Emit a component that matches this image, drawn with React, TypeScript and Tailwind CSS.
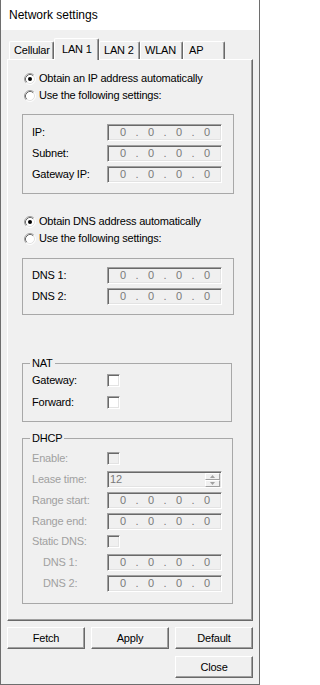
import React from "react";

// classic win32 dialog look, all flow layout

function Radio({ checked }: { checked?: boolean }) {
  return (
    <svg width="12" height="12" viewBox="0 0 12 12" className="shrink-0">
      <circle cx="6" cy="6" r="5" fill="#fff" />
      <path d="M2.11 9.89 A5.5 5.5 0 0 1 9.89 2.11" stroke="#a0a0a0" fill="none" />
      <path d="M9.89 2.11 A5.5 5.5 0 0 1 2.11 9.89" stroke="#ffffff" fill="none" />
      <path d="M2.82 9.18 A4.5 4.5 0 0 1 9.18 2.82" stroke="#696969" fill="none" />
      <path d="M9.18 2.82 A4.5 4.5 0 0 1 2.82 9.18" stroke="#e3e3e3" fill="none" />
      {checked && <circle cx="6" cy="6" r="2" fill="#000" />}
    </svg>
  );
}

function Check({ disabled }: { disabled?: boolean }) {
  return (
    <span
      className={`block w-[13px] h-[13px] border border-t-[#a0a0a0] border-l-[#a0a0a0] border-r-white border-b-white shadow-[inset_1px_1px_0_#696969,inset_-1px_-1px_0_#e3e3e3] ${
        disabled ? "bg-[#f0f0f0]" : "bg-white"
      }`}
    />
  );
}

function IpField() {
  const parts = ["0", ".", "0", ".", "0", ".", "0"];
  return (
    <div className="w-[115px] h-[17px] flex items-center pl-[7px] border border-t-[#a0a0a0] border-l-[#a0a0a0] border-r-white border-b-white shadow-[inset_1px_1px_0_#696969,inset_-1px_-1px_0_#e3e3e3] bg-[#f0f0f0] text-[#7a7a7a]">
      {parts.map((p, i) => (
        <span key={i} className={p === "." ? "w-[12px] text-center" : "w-[16px] text-center"}>
          {p}
        </span>
      ))}
    </div>
  );
}

function SpinBtn({ up }: { up?: boolean }) {
  return (
    <div className="flex-1 flex items-center justify-center bg-[#f0f0f0] border border-t-white border-l-white border-r-[#a0a0a0] border-b-[#a0a0a0]">
      <svg width="5" height="3" viewBox="0 0 5 3">
        <path d={up ? "M2.5 0 L5 3 L0 3 Z" : "M0 0 L5 0 L2.5 3 Z"} fill="#a0a0a0" />
      </svg>
    </div>
  );
}

function SpinField() {
  return (
    <div className="w-[115px] h-[17px] flex border border-t-[#a0a0a0] border-l-[#a0a0a0] border-r-white border-b-white shadow-[inset_1px_1px_0_#696969,inset_-1px_-1px_0_#e3e3e3] bg-[#f0f0f0]">
      <span className="flex-1 pl-[2px] pt-[1px] text-[#7a7a7a]">12</span>
      <div className="w-[16px] flex flex-col pt-[1px] pr-[1px]">
        <SpinBtn up />
        <SpinBtn />
      </div>
    </div>
  );
}

function Row({
  label,
  children,
  dim,
  indent,
  className = "",
}: {
  label: string;
  children: React.ReactNode;
  dim?: boolean;
  indent?: boolean;
  className?: string;
}) {
  return (
    <div className={`flex items-center h-[17px] pl-[9px] ${className}`}>
      <span className={`w-[75px] shrink-0 ${indent ? "pl-[11px]" : ""} ${dim ? "text-[#a0a0a0]" : "text-black"}`}>
        {label}
      </span>
      {children}
    </div>
  );
}

function RadioRow({ checked, text }: { checked?: boolean; text: string }) {
  return (
    <div className="flex items-center h-[17px] pl-[16px] gap-[3px]">
      <Radio checked={checked} />
      <span>{text}</span>
    </div>
  );
}

function Tab({ label, selected, w, pad }: { label: string; selected?: boolean; w: string; pad: string }) {
  return (
    <div
      className={`${w} ${pad} flex items-center rounded-t-[2px] border-t border-l border-r border-t-white border-l-white border-r-[#696969] shadow-[inset_-1px_0_0_#a0a0a0] bg-[#f0f0f0] ${
        selected ? "h-[22px]" : "h-[18px] mb-[1px]"
      }`}
    >
      {label}
    </div>
  );
}

function Button({ label }: { label: string }) {
  return (
    <button className="w-[78px] h-[22px] flex items-center justify-center bg-[#f0f0f0] border border-t-white border-l-white border-r-[#696969] border-b-[#696969] shadow-[inset_-1px_-1px_0_#a0a0a0]">
      {label}
    </button>
  );
}

export default function App() {
  return (
    <div className="w-[260px] h-[685px] flex flex-col bg-[#f0f0f0] border-x border-b border-[#6e6e6e] font-['Liberation_Sans',Arial,sans-serif] text-[11px] leading-[13px] tracking-[-0.2px] text-black">
      <div className="h-[30px] shrink-0 flex items-center pl-[8px] bg-white text-[12px] tracking-normal">
        Network settings
      </div>

      <div className="px-[6px] pt-[8px] flex flex-col">
        {/* tabs */}
        <div className="relative z-10 flex items-end h-[22px] pl-[2px] mb-[-1px]">
          <Tab label="Cellular" w="w-[45px]" pad="pl-[4px]" />
          <Tab label="LAN 1" w="w-[45px]" pad="pl-[7px]" selected />
          <Tab label="LAN 2" w="w-[41px]" pad="pl-[4px]" />
          <Tab label="WLAN" w="w-[43px]" pad="pl-[4px]" />
          <Tab label="AP" w="w-[42px]" pad="pl-[5px]" />
        </div>

        {/* tab panel */}
        <div className="flex flex-col w-[246px] border border-t-white border-l-white border-r-[#696969] border-b-[#696969] shadow-[inset_-1px_-1px_0_#a0a0a0] pb-[16px]">
          <div className="mt-[10px]">
            <RadioRow checked text="Obtain an IP address automatically" />
            <RadioRow text="Use the following settings:" />
          </div>

          <div className="ml-[14px] mt-[10px] w-[212px] border border-[#a8a8a8] pt-[9px] pb-[10px] flex flex-col gap-[4px]">
            <Row label="IP:">
              <IpField />
            </Row>
            <Row label="Subnet:">
              <IpField />
            </Row>
            <Row label="Gateway IP:">
              <IpField />
            </Row>
          </div>

          <div className="mt-[19px]">
            <RadioRow checked text="Obtain DNS address automatically" />
            <RadioRow text="Use the following settings:" />
          </div>

          <div className="ml-[14px] mt-[11px] w-[212px] border border-[#a8a8a8] pt-[8px] pb-[9px] flex flex-col gap-[4px]">
            <Row label="DNS 1:">
              <IpField />
            </Row>
            <Row label="DNS 2:">
              <IpField />
            </Row>
          </div>

          <fieldset className="ml-[14px] mt-[42px] w-[210px] border border-[#a8a8a8] px-0 pt-[2px] pb-[10px]">
            <legend className="ml-[7px] px-[2px] leading-[13px]">NAT</legend>
            <div className="flex flex-col gap-[5px]">
              <Row label="Gateway:">
                <Check />
              </Row>
              <Row label="Forward:">
                <Check />
              </Row>
            </div>
          </fieldset>

          <fieldset className="ml-[14px] mt-[10px] w-[211px] border border-[#a8a8a8] px-0 pt-[5px] pb-[11px]">
            <legend className="ml-[7px] px-[2px] leading-[13px]">DHCP</legend>
            <div className="flex flex-col">
              <Row label="Enable:" dim>
                <Check disabled />
              </Row>
              <Row label="Lease time:" dim className="mt-[4px]">
                <SpinField />
              </Row>
              <Row label="Range start:" dim className="mt-[4px]">
                <IpField />
              </Row>
              <Row label="Range end:" dim className="mt-[4px]">
                <IpField />
              </Row>
              <Row label="Static DNS:" dim className="mt-[3px]">
                <Check disabled />
              </Row>
              <Row label="DNS 1:" dim indent className="mt-[4px]">
                <IpField />
              </Row>
              <Row label="DNS 2:" dim indent className="mt-[4px]">
                <IpField />
              </Row>
            </div>
          </fieldset>
        </div>

        <div className="flex gap-[6px] mt-[6px]">
          <Button label="Fetch" />
          <Button label="Apply" />
          <Button label="Default" />
        </div>
        <div className="flex justify-end mt-[7px]">
          <Button label="Close" />
        </div>
      </div>
    </div>
  );
}
